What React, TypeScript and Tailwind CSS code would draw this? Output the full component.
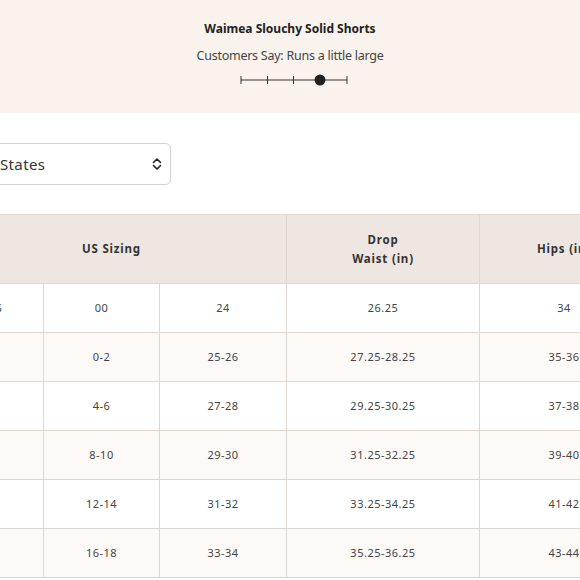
import React from "react";

const rows = [
  ["XXS", "00", "24", "26.25", "34"],
  ["XS", "0-2", "25-26", "27.25-28.25", "35-36"],
  ["S", "4-6", "27-28", "29.25-30.25", "37-38"],
  ["M", "8-10", "29-30", "31.25-32.25", "39-40"],
  ["L", "12-14", "31-32", "33.25-34.25", "41-42"],
  ["XL", "16-18", "33-34", "35.25-36.25", "43-44"],
];

export default function App() {
  return (
    <div
      className="w-[580px] h-[580px] overflow-hidden bg-white text-[#333]"
      style={{ fontFamily: '"Noto Sans", sans-serif' }}
    >
      <div className="h-[113px] bg-[#f9f2ed] flex flex-col items-center pt-[20px]">
        <div className="text-[12px] leading-[18px] font-bold tracking-[0px] text-[#222]">
          Waimea Slouchy Solid Shorts
        </div>
        <div className="mt-[9px] text-[12.5px] leading-[18px] tracking-[-0.25px] text-[#444]">
          Customers Say: Runs a little large
        </div>
        <svg width="110" height="14" viewBox="0 0 110 14" className="mt-[8px] ml-[10px]">
          <line x1="1" y1="7" x2="107" y2="7" stroke="#333" strokeWidth="1" />
          {[1, 27.5, 53.5, 107].map((x) => (
            <line key={x} x1={x} y1="3" x2={x} y2="11" stroke="#333" strokeWidth="1" />
          ))}
          <circle cx="80" cy="7" r="5.5" fill="#222" />
        </svg>
      </div>

      <div className="ml-[-68px] mt-[30px] w-[239px] h-[42px] border border-[#d6d2cf] rounded-[5px] flex items-center justify-between pl-[13px] pr-[7px]">
        <span className="text-[15px] tracking-[0.4px] text-[#333]">United States</span>
        <svg width="12" height="14" viewBox="0 0 12 14" fill="none" stroke="#222" strokeWidth="1.6" strokeLinecap="round" strokeLinejoin="round">
          <path d="M2.5 5.5 L6 2 L9.5 5.5" />
          <path d="M2.5 8.5 L6 12 L9.5 8.5" />
        </svg>
      </div>

      <table className="ml-[-64px] mt-[29px] border-collapse table-fixed w-[712px] text-[11px] text-[#444]">
        <colgroup>
          <col className="w-[107px]" />
          <col className="w-[116px]" />
          <col className="w-[127px]" />
          <col className="w-[193px]" />
          <col className="w-[169px]" />
        </colgroup>
        <thead>
          <tr className="h-[69px] bg-[#eee6e1]">
            <th colSpan={3} className="border border-[#ddd6d1] font-bold tracking-[0.8px] text-[#333] text-[11.5px]">
              US Sizing
            </th>
            <th className="border border-[#ddd6d1] font-bold tracking-[0.8px] text-[#333] text-[11.5px] leading-[19px]">
              Drop
              <br />
              Waist (in)
            </th>
            <th className="border border-[#ddd6d1] font-bold tracking-[0.8px] text-[#333] text-[11.5px]">
              Hips (in)
            </th>
          </tr>
        </thead>
        <tbody>
          {rows.map((r, i) => (
            <tr key={i} className={`h-[49px] ${i % 2 === 1 ? "bg-[#fdf9f7]" : "bg-white"}`}>
              {r.map((c, j) => (
                <td key={j} className={`border border-[#ddd6d1] text-center tracking-[0.5px] ${j === 0 ? "pl-[4px]" : ""}`}>
                  {c}
                </td>
              ))}
            </tr>
          ))}
        </tbody>
      </table>
    </div>
  );
}
